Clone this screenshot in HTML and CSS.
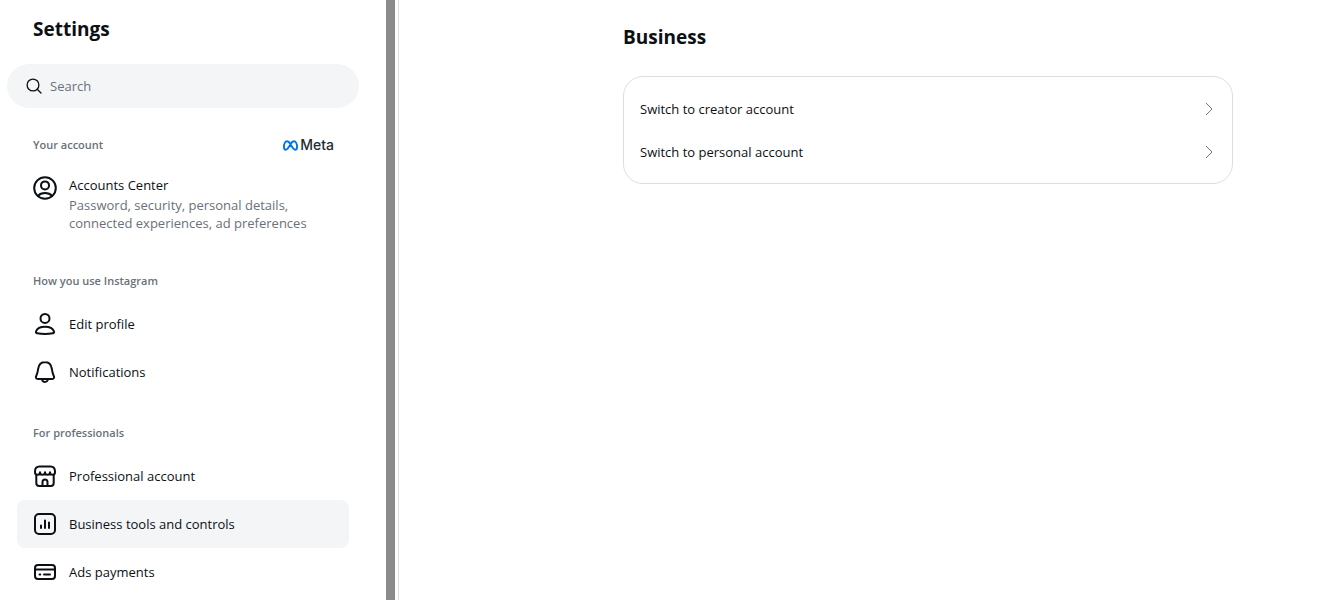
FILE: index.html
```html
<!DOCTYPE html>
<html lang="en">
<head>
    <meta charset="UTF-8">
    <meta name="viewport" content="width=device-width, initial-scale=1.0">
    <title>Settings</title>
    <link rel="stylesheet" href="styles.css">
</head>
<body>
    <div class="sidebar">
        <div class="sidebar-content">
            <h1 class="title">Settings</h1>
            <label class="search">
                <svg class="search-icon" viewBox="0 0 16 16" aria-hidden="true">
                    <circle cx="7" cy="7" r="5.9"/>
                    <path d="M11.2 11.2l3.8 3.8"/>
                </svg>
                <input class="search-input" type="text" placeholder="Search" aria-label="Search">
            </label>
            <nav class="menu">
                <div class="section-header">
                    <h2 class="section-title">Your account</h2>
                    <span class="meta">
                        <svg class="meta-icon" viewBox="0 0 16 11" aria-hidden="true">
                            <path d="M8 4.2C6.9 2.2 5.8 1 4.5 1C2.4 1 1 4 1 7.1C1 9 1.8 10 3 10C4.6 10 5.7 8.3 8 4.2C9.1 2.2 10.2 1 11.5 1C13.6 1 15 4 15 7.1C15 9 14.2 10 13 10C11.4 10 10.3 8.3 8 4.2"/>
                        </svg>
                        <span class="meta-name">Meta</span>
                    </span>
                </div>
                <a class="menu-item" href="#">
                    <svg class="icon" viewBox="0 0 24 24" aria-hidden="true">
                        <circle cx="12" cy="12" r="10.8"/>
                        <circle cx="12" cy="9.4" r="4"/>
                        <path d="M5 20c1.5-1.9 4-2.9 7-2.9s5.5 1 7 2.9"/>
                    </svg>
                    <span class="item-text">
                        <span class="item-name">Accounts Center</span>
                        <span class="item-desc">Password, security, personal details, connected experiences, ad preferences</span>
                    </span>
                </a>

                <div class="section-header">
                    <h2 class="section-title">How you use Instagram</h2>
                </div>
                <a class="menu-item" href="#">
                    <svg class="icon" viewBox="0 0 24 24" aria-hidden="true">
                        <circle cx="12" cy="6.4" r="4.5"/>
                        <path d="M12 14.700c-4.600 0-8 2-9 4.800c-.3 1 .2 1.600 1.200 1.800c2.300.5 5 .8 7.800.8s5.500-.3 7.800-.8c1-.2 1.500-.8 1.200-1.800c-1-2.800-4.400-4.800-9-4.800z"/>
                    </svg>
                    <span class="item-name">Edit profile</span>
                </a>
                <a class="menu-item" href="#">
                    <svg class="icon" viewBox="0 0 24 24" aria-hidden="true">
                        <path d="M12 2c-3.800 0-6.300 3-6.900 7c-.4 3.200-.7 4.500-1.600 6.200c-1.200 2.400-.6 3.800 1.500 3.800h14c2.100 0 2.700-1.400 1.500-3.800c-.9-1.700-1.200-3-1.600-6.200C18.300 5 15.800 2 12 2z"/>
                        <path d="M9.200 20c.4 1.300 1.500 2 2.800 2s2.400-.7 2.800-2"/>
                    </svg>
                    <span class="item-name">Notifications</span>
                </a>

                <div class="section-header">
                    <h2 class="section-title">For professionals</h2>
                </div>
                <a class="menu-item" href="#">
                    <svg class="icon" viewBox="0 0 24 24" aria-hidden="true">
                        <path d="M3.300 11.500V19a3 3 0 0 0 3 3h11.400a3 3 0 0 0 3-3v-7.500"/>
                        <path d="M2 7.500C2 4 3.500 2.500 6.500 2.500h11C20.500 2.500 22 4 22 7.500v.7a2.500 2.500 0 0 1-5 0a2.500 2.500 0 0 1-5 0a2.500 2.500 0 0 1-5 0a2.500 2.500 0 0 1-5 0z"/>
                        <path d="M9.500 22v-4a2.500 2.500 0 0 1 5 0V22"/>
                    </svg>
                    <span class="item-name">Professional account</span>
                </a>
                <a class="menu-item active" href="#">
                    <svg class="icon" viewBox="0 0 24 24" aria-hidden="true">
                        <rect x="2" y="2" width="20" height="20" rx="4"/>
                        <path d="M8 13.500V16M12 8.500V16M16 10.500V16"/>
                    </svg>
                    <span class="item-name">Business tools and controls</span>
                </a>
                <a class="menu-item" href="#">
                    <svg class="icon" viewBox="0 0 24 24" aria-hidden="true">
                        <rect x="2" y="5" width="20" height="14" rx="3"/>
                        <path d="M2 9.500h20M6.500 14.500h.8M11 14.500h6"/>
                    </svg>
                    <span class="item-name">Ads payments</span>
                </a>
            </nav>
        </div>
        <div class="scrollbar"></div>
    </div>

    <main class="main">
        <h2 class="title">Business</h2>
        <div class="card">
            <button class="card-row" type="button">
                <span>Switch to creator account</span>
                <svg class="chevron" viewBox="0 0 8 14" aria-hidden="true"><path d="M1 1l6 6-6 6"/></svg>
            </button>
            <button class="card-row" type="button">
                <span>Switch to personal account</span>
                <svg class="chevron" viewBox="0 0 8 14" aria-hidden="true"><path d="M1 1l6 6-6 6"/></svg>
            </button>
        </div>
    </main>
</body>
</html>
```
FILE: styles.css
```css
* {
    box-sizing: border-box;
}

body {
    display: flex;
    height: 100vh;
    margin: 0;
    overflow: hidden;
    font-family: "Segoe UI", "Open Sans", sans-serif;
    font-size: 13px;
    color: #0c1014;
    background-color: #fff;
}

.sidebar {
    display: flex;
    flex: none;
    width: 399px;
    border-right: 1px solid #dbdfe4;
}

.sidebar-content {
    flex: 1;
    padding: 16px 27px 0 7px;
}

.scrollbar {
    width: 9px;
    margin-right: 3px;
    background-color: #8b8b8b;
}

.title {
    margin: 0;
    font-size: 19px;
    line-height: 26px;
    font-weight: 700;
}

.sidebar .title {
    padding-left: 26px;
}

.search {
    display: flex;
    align-items: center;
    gap: 8px;
    height: 44px;
    margin-top: 22px;
    padding: 0 19px;
    border-radius: 22px;
    background-color: #f3f5f7;
}

.search-icon {
    width: 16px;
    height: 16px;
    fill: none;
    stroke: #0c1014;
    stroke-width: 1.3;
    stroke-linecap: round;
}

.search-input {
    flex: 1;
    min-width: 0;
    padding: 0;
    border: 0;
    outline: none;
    font: inherit;
    color: inherit;
    background: none;
}

.search-input::placeholder {
    color: #6a717a;
}

.menu {
    padding: 0 10px;
}

.section-header {
    display: flex;
    align-items: center;
    justify-content: space-between;
    height: 16px;
    margin: 29px 0 11px;
    padding: 0 15px 0 16px;
}

.section-title {
    margin: 0;
    font-size: 11px;
    line-height: 16px;
    font-weight: 600;
    color: #6a717a;
}

.meta {
    display: flex;
    align-items: center;
    gap: 2px;
}

.meta-icon {
    width: 15px;
    height: 11px;
    fill: none;
    stroke: #0073ee;
    stroke-width: 2;
}

.meta-name {
    font-family: Inter, sans-serif;
    font-size: 14px;
    line-height: 16px;
    font-weight: 500;
    color: #1c2b33;
}

.menu-item {
    display: flex;
    gap: 12px;
    padding: 12px 16px;
    border-radius: 8px;
    color: inherit;
    text-decoration: none;
}

.menu-item.active {
    background-color: #f3f5f7;
}

.icon {
    flex: none;
    width: 24px;
    height: 24px;
    fill: none;
    stroke: #0c1014;
    stroke-width: 2;
    stroke-linecap: round;
    stroke-linejoin: round;
}

.item-text {
    display: flex;
    flex-direction: column;
    gap: 2px;
}

.item-name {
    line-height: 18px;
}

.menu-item > .item-name {
    line-height: 24px;
}

.item-desc {
    line-height: 18px;
    color: #6a717a;
}

.main {
    flex: 1;
    padding: 24px 87px 0 224px;
}

.card {
    margin-top: 26px;
    padding: 10px 0;
    border: 1px solid #dbdfe4;
    border-radius: 20px;
}

.card-row {
    display: flex;
    align-items: center;
    justify-content: space-between;
    width: 100%;
    height: 43px;
    padding: 0 19px 0 16px;
    border: 0;
    font: inherit;
    color: inherit;
    background: none;
    cursor: pointer;
}

.chevron {
    width: 8px;
    height: 14px;
    fill: none;
    stroke: #70757b;
}
```
